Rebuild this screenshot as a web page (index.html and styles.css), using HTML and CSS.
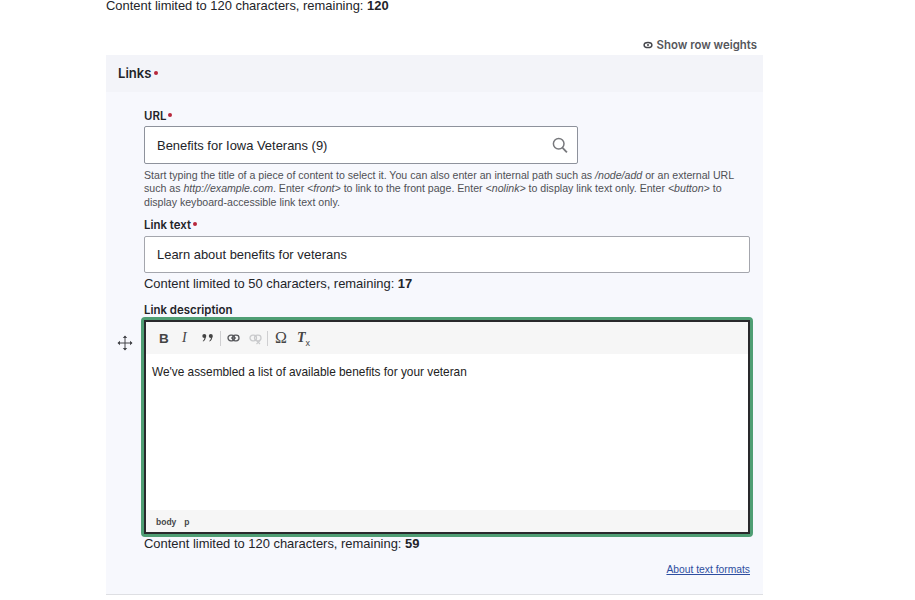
FILE: index.html
```html
<!DOCTYPE html>
<html lang="en">
<head>
<meta charset="utf-8">
<title>Links</title>
<link rel="stylesheet" href="styles.css">
</head>
<body>
<main class="page">
  <p class="counter counter-top">Content limited to 120 characters, remaining: <strong>120</strong></p>
  <div class="weights">
    <svg class="eye" width="10" height="8" viewBox="0 0 10 8" aria-hidden="true"><ellipse cx="5" cy="4" rx="3.900" ry="2.600" fill="#fff" stroke="#45464b" stroke-width="1.500"/><circle cx="5" cy="4" r="1" fill="#45464b"/></svg>
    <span>Show row weights</span>
  </div>
  <section class="panel">
    <h2 class="panel-head">Links<span class="req"></span></h2>
    <div class="panel-body">
      <label class="label label-url">URL<span class="req"></span></label>
      <div class="input input-url">
        <span>Benefits for Iowa Veterans (9)</span>
        <svg class="search" width="16" height="16" viewBox="0 0 16 16" aria-hidden="true"><circle cx="6.700" cy="6.700" r="5.300" fill="none" stroke="#77787c" stroke-width="1.500"/><path d="M10.600 10.800l4.300 4.500" stroke="#77787c" stroke-width="1.800" fill="none"/></svg>
      </div>
      <p class="help">Start typing the title of a piece of content to select it. You can also enter an internal path such as <em>/node/add</em> or an external URL such as <em>http://example.com</em>. Enter <em>&lt;front&gt;</em> to link to the front page. Enter <em>&lt;nolink&gt;</em> to display link text only. Enter <em>&lt;button&gt;</em> to display keyboard-accessible link text only.</p>
      <label class="label label-text">Link text<span class="req"></span></label>
      <div class="input input-text"><span>Learn about benefits for veterans</span></div>
      <p class="counter counter-mid">Content limited to 50 characters, remaining: <strong>17</strong></p>
      <label class="label label-desc">Link description</label>
      <svg class="move" width="16" height="16" viewBox="0 0 16 16" aria-hidden="true"><path d="M8 1v14M1 8h14" stroke="#44454a" stroke-width="1" fill="none"/><path d="M8 .5L5.800 3h4.400zM8 15.500L5.800 13h4.400zM.5 8L3 5.800v4.400zM15.500 8L13 5.800v4.400z" fill="#44454a"/></svg>
      <div class="editor-focus">
        <div class="editor">
          <div class="toolbar">
            <span class="tool tool-b">B</span>
            <span class="tool tool-i">I</span>
            <svg class="tool-quote" width="14" height="10" viewBox="0 0 14 10" aria-hidden="true"><circle cx="3.300" cy="3" r="2" fill="#444"/><path d="M4.800 3c.2 2.600-.9 4.600-2.700 5.600l-.4-.6C3 7 3.500 5.800 3.400 4.500z" fill="#444"/><circle cx="9.800" cy="3" r="2" fill="#444"/><path d="M11.300 3c.2 2.600-.9 4.600-2.700 5.600l-.4-.6c1.300-1 1.800-2.200 1.700-3.500z" fill="#444"/></svg>
            <span class="sep"></span>
            <svg class="tool-link" width="13" height="8" viewBox="0 0 13 8" aria-hidden="true"><rect x="1" y="1.200" width="6.500" height="5.600" rx="2.800" fill="none" stroke="#55565a" stroke-width="1.300"/><rect x="5.500" y="1.200" width="6.500" height="5.600" rx="2.800" fill="none" stroke="#55565a" stroke-width="1.300"/><path d="M4 4h5" stroke="#55565a" stroke-width="1.200"/></svg>
            <svg class="tool-unlink" width="13" height="11" viewBox="0 0 13 11" aria-hidden="true"><rect x="1" y="1.200" width="6.500" height="5.600" rx="2.800" fill="none" stroke="#c9cacc" stroke-width="1.300"/><rect x="5.500" y="1.200" width="6.500" height="5.600" rx="2.800" fill="none" stroke="#c9cacc" stroke-width="1.300"/><path d="M7.500 6.500l3.500 3.500m0-3.500L7.500 10" stroke="#c9cacc" stroke-width="1.100"/></svg>
            <span class="sep"></span>
            <span class="tool tool-omega">Ω</span>
            <span class="tool tool-clear">T<sub>x</sub></span>
          </div>
          <div class="editor-content">We've assembled a list of available benefits for your veteran</div>
          <div class="statusbar"><span>body</span><span>p</span></div>
        </div>
      </div>
      <p class="counter counter-low">Content limited to 120 characters, remaining: <strong>59</strong></p>
      <div class="about"><a href="#">About text formats</a></div>
    </div>
  </section>
</main>
</body>
</html>
```

FILE: styles.css
```css
* { box-sizing: border-box; }
html, body { margin: 0; padding: 0; background: #fff; }
body { font-family: "Liberation Sans", Arial, sans-serif; color: #232429; height: 600px; overflow: hidden; }
.page { width: 657px; margin: -4px 0 0 106px; }
p { margin: 0; }
.counter { font-size: 12.950px; line-height: 20px; color: #232429; }
.counter strong { font-weight: 700; }
.weights { display: flex; justify-content: flex-end; align-items: center; gap: 4px; margin-top: 19px; padding-right: 6px; height: 20px; font-family: Inter, sans-serif; font-size: 11.400px; font-weight: 600; color: #55565b; }
.panel { background: #f7f8fd; height: 540px; border-bottom: 1px solid #dedfe3; }
.panel-head { margin: 0; height: 37px; padding: 0 12px; background: #f3f4f9; font-family: Inter, sans-serif; font-size: 13.100px; font-weight: 600; line-height: 37px; }
.req { display: inline-block; width: 4px; height: 4px; margin-left: 2px; border-radius: 50%; background: #b8283c; vertical-align: 3px; }
.panel-body { position: relative; padding: 17px 13px 0 38px; }
.label { display: block; font-family: Inter, sans-serif; font-size: 11.450px; font-weight: 600; line-height: 15px; }
.input { display: flex; align-items: center; justify-content: space-between; background: #fff; border: 1px solid #8e929c; border-radius: 2px; padding: 0 9px 0 12px; font-size: 12.950px; color: #232429; }
.input-url { width: 434px; height: 38px; margin-top: 2px; }
.input-text { height: 37px; margin-top: 3px; border-color: #a4a6ad; }
.help { margin-top: 4.500px; font-size: 10.600px; line-height: 13.600px; color: #4f5055; }
.label-text { margin-top: 9px; }
.counter-mid { margin-top: 1px; }
.label-desc { margin-top: 9px; }
.move { position: absolute; left: 11px; top: 243px; }
.editor-focus { margin: -1px -3px 0; height: 220px; border: 3px solid #4f9e74; border-radius: 4px; }
.editor { display: flex; flex-direction: column; height: 100%; border: 2px solid #29292c; background: #fff; }
.toolbar { display: flex; align-items: center; height: 32px; padding-left: 13px; background: #f6f6f6; color: #444; flex: none; }
.tool { font-family: "Liberation Serif", serif; line-height: 1; }
.tool-b { width: 21px; font-family: "Liberation Sans", sans-serif; font-size: 13.500px; font-weight: 700; }
.tool-i { width: 19px; margin-left: 2px; font-size: 14px; font-style: italic; }
.tool-quote { margin-right: 5px; }
.sep { width: 1px; height: 15px; background: #cfcfd1; margin-right: 6px; }
.tool-link { margin-right: 9px; }
.tool-unlink { margin-right: 5px; margin-top: 3px; }
.tool-omega { width: 22px; font-size: 16px; margin-left: 1px; }
.tool-clear { font-size: 14px; font-style: italic; font-weight: 700; }
.tool-clear sub { font-size: 9px; line-height: 0; font-style: normal; font-weight: 400; font-family: "Liberation Sans", sans-serif; }
.editor-content { flex: 1; padding: 10px 6px 0; font-size: 11.850px; line-height: 16px; color: #222; }
.statusbar { display: flex; gap: 8px; height: 22px; flex: none; align-items: center; padding: 1px 0 0 10px; background: #f6f6f6; font-size: 8.500px; font-weight: 700; color: #45464a; }
.counter-low { margin-top: -3px; }
.about { margin-top: 9px; text-align: right; font-size: 10.300px; line-height: 14px; }
.about a { color: #2e4ea0; }
```
